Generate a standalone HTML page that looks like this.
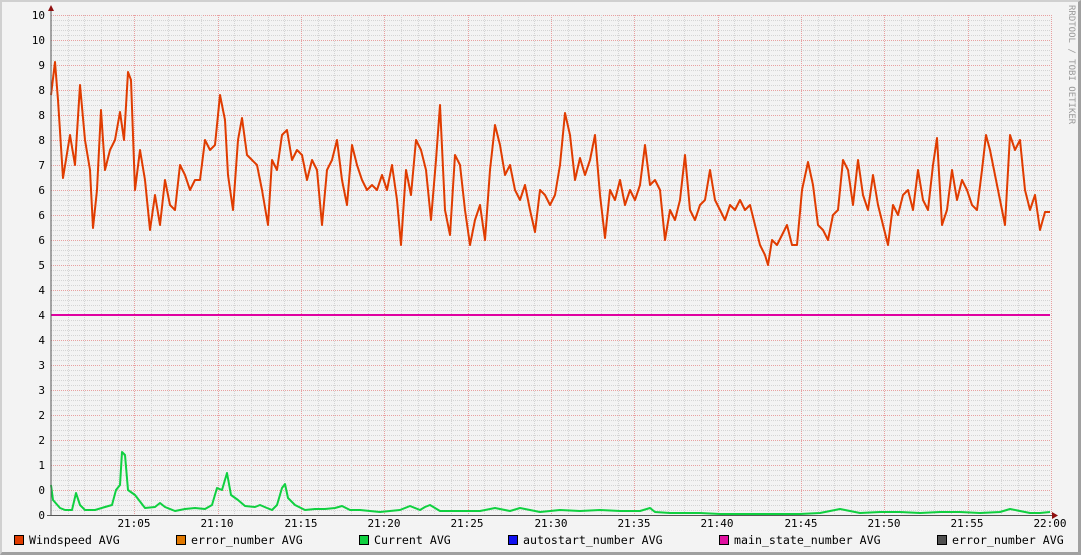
<!DOCTYPE html>
<html><head><style>
html,body{margin:0;padding:0;background:#f3f3f3;}
body{width:1081px;height:555px;position:relative;overflow:hidden;font-family:"DejaVu Sans Mono","Liberation Mono",monospace;}
#frame{position:absolute;left:0;top:0;width:1081px;height:555px;box-sizing:border-box;border-top:2px solid #d0d0d0;border-left:2px solid #d0d0d0;border-right:3px solid #a0a0a0;border-bottom:3px solid #a0a0a0;}
svg{position:absolute;left:0;top:0;}
.yl{font-size:11px;fill:#000;text-anchor:end;}
.xl{font-size:11px;fill:#000;text-anchor:middle;}
.lg{position:absolute;top:534px;font-size:11.6px;color:#000;white-space:pre;line-height:13px;}
.lg i{display:inline-block;width:8px;height:8px;border:1px solid #000;margin-right:5px;vertical-align:-1px;}
#wm{position:absolute;left:1064px;top:5px;font-size:9px;color:#999;transform-origin:0 0;transform:translate(12px,0) rotate(90deg);white-space:pre;}
</style></head><body>
<div id="frame"></div>
<svg id="g" width="1081" height="555">
<g id="grid"></g>
<g>
<text class="yl" x="45" y="19">10</text><text class="yl" x="45" y="44">10</text><text class="yl" x="45" y="69">9</text><text class="yl" x="45" y="94">8</text><text class="yl" x="45" y="119">8</text><text class="yl" x="45" y="144">8</text><text class="yl" x="45" y="169">7</text><text class="yl" x="45" y="194">6</text><text class="yl" x="45" y="219">6</text><text class="yl" x="45" y="244">6</text><text class="yl" x="45" y="269">5</text><text class="yl" x="45" y="294">4</text><text class="yl" x="45" y="319">4</text><text class="yl" x="45" y="344">4</text><text class="yl" x="45" y="369">3</text><text class="yl" x="45" y="394">3</text><text class="yl" x="45" y="419">2</text><text class="yl" x="45" y="444">2</text><text class="yl" x="45" y="469">1</text><text class="yl" x="45" y="494">0</text><text class="yl" x="45" y="519">0</text>
<text class="xl" x="134" y="527">21:05</text><text class="xl" x="217" y="527">21:10</text><text class="xl" x="301" y="527">21:15</text><text class="xl" x="384" y="527">21:20</text><text class="xl" x="467" y="527">21:25</text><text class="xl" x="551" y="527">21:30</text><text class="xl" x="634" y="527">21:35</text><text class="xl" x="717" y="527">21:40</text><text class="xl" x="801" y="527">21:45</text><text class="xl" x="884" y="527">21:50</text><text class="xl" x="967" y="527">21:55</text><text class="xl" x="1050" y="527">22:00</text>
</g>
<line x1="51" y1="315" x2="1050" y2="315" stroke="#e000a0" stroke-width="2"/>
<polyline id="ws" fill="none" stroke="#e03c00" stroke-width="2" stroke-linejoin="round"/>
<polyline id="cur" fill="none" stroke="#10d040" stroke-width="2" stroke-linejoin="round"/>
<line x1="51" y1="10" x2="51" y2="516" stroke="#555" stroke-width="1"/>
<line x1="47" y1="515.5" x2="1056" y2="515.5" stroke="#555" stroke-width="1"/>
<polygon points="48,11 54,11 51,5" fill="#901010"/>
<polygon points="1052,512 1052,519 1058,515.5" fill="#901010"/>
</svg>
<div id="wm">RRDTOOL / TOBI OETIKER</div>
<div class="lg" style="left:14px"><i style="background:#e03c00"></i>Windspeed AVG</div>
<div class="lg" style="left:176px"><i style="background:#e07800"></i>error_number AVG</div>
<div class="lg" style="left:359px"><i style="background:#10d040"></i>Current AVG</div>
<div class="lg" style="left:508px"><i style="background:#1010f0"></i>autostart_number AVG</div>
<div class="lg" style="left:719px"><i style="background:#e010a0"></i>main_state_number AVG</div>
<div class="lg" style="left:937px"><i style="background:#505050"></i>error_number AVG</div>
<script>
var ns="http://www.w3.org/2000/svg",g=document.getElementById("grid");
function ln(x1,y1,x2,y2,c){var l=document.createElementNS(ns,"line");l.setAttribute("x1",x1);l.setAttribute("y1",y1);l.setAttribute("x2",x2);l.setAttribute("y2",y2);l.setAttribute("stroke",c);l.setAttribute("stroke-width","1");l.setAttribute("stroke-dasharray","1,1");g.appendChild(l);}
for(var y=15;y<515;y+=5){ln(51,y+.5,1050,y+.5,(y-15)%25==0?"#e8a0a0":"#d4d4d4");}
for(var i=1;i<=60;i++){var x=Math.round(51+i*1000/60)+.5;ln(x,15,x,515,i%5==0?"#e8a0a0":"#d4d4d4");}
var w=[51,95,55,62,58,100,63,178,70,135,75,165,80,85,85,140,90,170,93,228,97,190,101,110,105,170,110,150,115,140,120,112,124,140,128,72,131,80,135,190,140,150,145,180,150,230,155,195,160,225,165,180,170,205,175,210,180,165,185,175,190,190,195,180,200,180,205,140,210,150,215,145,220,95,225,120,228,175,233,210,238,140,242,118,247,155,252,160,257,165,262,190,268,225,272,160,277,170,282,135,287,130,292,160,297,150,302,155,307,180,312,160,317,170,322,225,327,170,332,160,337,140,342,180,347,205,352,145,357,165,362,180,367,190,372,185,377,190,382,175,387,190,392,165,397,200,401,245,406,170,411,195,416,140,421,150,426,170,431,220,436,160,440,105,445,210,450,235,455,155,460,165,465,210,470,245,475,220,480,205,485,240,490,170,495,125,500,145,505,175,510,165,515,190,520,200,525,185,530,210,535,232,540,190,545,195,550,205,555,195,560,165,565,113,570,135,575,180,580,158,585,175,590,160,595,135,600,195,605,238,610,190,615,200,620,180,625,205,630,190,635,200,640,185,645,145,650,185,655,180,660,190,665,240,670,210,675,220,680,200,685,155,690,210,695,220,700,205,705,200,710,170,715,200,720,210,725,220,730,205,735,210,740,200,745,210,750,205,755,225,760,245,765,255,768,265,772,240,777,245,782,235,787,225,792,245,797,245,802,190,808,162,813,185,818,225,823,230,828,240,833,215,838,210,843,160,848,170,853,205,858,160,863,195,868,210,873,175,878,205,883,225,888,245,893,205,898,215,903,195,908,190,913,210,918,170,923,200,928,210,933,165,937,138,942,225,947,210,952,170,957,200,962,180,967,190,972,205,977,210,982,170,986,135,990,150,995,175,1000,200,1005,225,1010,135,1015,150,1020,140,1025,190,1030,210,1035,195,1040,230,1045,212,1050,212];
var c=[51,485,53,500,60,508,65,510,72,510,76,493,80,505,85,510,95,510,105,507,112,505,116,490,120,485,122,452,125,455,128,490,135,495,145,508,155,507,160,503,165,507,175,511,185,509,195,508,205,509,212,505,217,488,222,490,227,473,231,495,238,500,245,506,255,507,260,505,267,508,272,510,277,505,282,488,285,484,288,498,295,505,305,510,315,509,325,509,335,508,342,506,350,510,360,510,380,512,400,510,410,506,420,510,425,507,430,505,440,511,460,511,480,511,495,508,510,511,520,508,540,512,560,510,580,511,600,510,620,511,640,511,650,508,655,512,670,513,690,513,700,513,720,514,740,514,760,514,780,514,800,514,820,513,840,509,850,511,860,513,880,512,900,512,920,513,940,512,960,512,980,513,1000,512,1010,509,1020,511,1030,513,1040,513,1050,512];
function pts(a){var s=[];for(var i=0;i<a.length;i+=2)s.push(a[i]+","+a[i+1]);return s.join(" ");}
document.getElementById("ws").setAttribute("points",pts(w));
document.getElementById("cur").setAttribute("points",pts(c));
</script>
</body></html>
